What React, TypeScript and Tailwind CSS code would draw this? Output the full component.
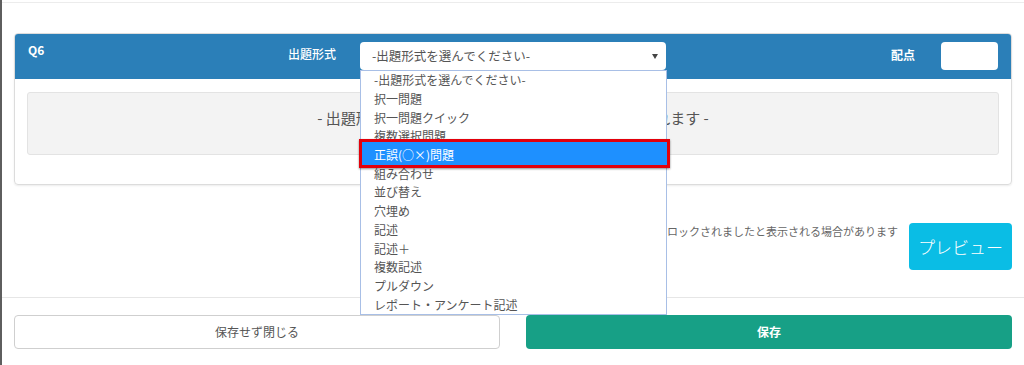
const options = [
  "-出題形式を選んでください-",
  "択一問題",
  "択一問題クイック",
  "複数選択問題",
  "正誤(○×)問題",
  "組み合わせ",
  "並び替え",
  "穴埋め",
  "記述",
  "記述＋",
  "複数記述",
  "プルダウン",
  "レポート・アンケート記述",
];

const SELECTED = 4;

const QuestionHeader = () => (
  <div className="flex h-[45px] items-start rounded-t-[3px] bg-[#2b7fb8] pl-[13px] pr-[13px] pt-[8px] text-white">
    <div className="w-[260px] pt-[1px] text-[12px] font-bold leading-[14px]">Q6</div>
    <div className="w-[72px] pt-[4px] text-[12px] font-medium leading-[16px]">出題形式</div>
    <div className="relative z-10 w-[306px]">
      <div className="flex h-[28px] items-center justify-between rounded-[4px] bg-white pl-[12px] pr-[8px] text-[12.5px] text-[#555]">
        <span>-出題形式を選んでください-</span>
        <svg width="6" height="5" viewBox="0 0 6 5">
          <path d="M0 0h6L3 5z" fill="#444" />
        </svg>
      </div>
      <ul className="absolute left-0 top-full w-[307px] border border-[#a8bfe6] bg-white text-[12px] text-[#555]">
        {options.map((o, i) =>
          i === SELECTED ? (
            <li key={o} className="relative flex h-[18.7px] items-center pl-[13px] text-white">
              <span className="absolute -bottom-[4px] -left-[2px] -right-[4px] -top-[7px] border-[3px] border-[#e3000b] bg-[#1e90ff] shadow-[0_1px_2px_rgba(0,0,0,0.45)]" />
              <span className="relative">{o}</span>
            </li>
          ) : (
            <li key={o} className="flex h-[18.7px] items-center pl-[13px]">
              {o}
            </li>
          )
        )}
      </ul>
    </div>
    <div className="flex-1" />
    <div className="pt-[5px] text-[12px] font-bold leading-[16px]">配点</div>
    <div className="ml-[26px] h-[28px] w-[57px] rounded-[4px] bg-white" />
  </div>
);

export default function App() {
  return (
    <div className="relative h-[365px] w-[1024px] overflow-hidden border-l-2 border-[#5e5e5e] bg-white font-['Noto_Sans_CJK_JP','Noto_Sans',sans-serif]">
      <div className="mt-[2px] border-t border-[#ececec]" />

      <div className="px-[12px] pt-[30px]">
        <div className="h-[152px] rounded-[4px] border border-[#dcdcdc] shadow-[0_1px_2px_rgba(0,0,0,0.08)]">
          <QuestionHeader />
          <div className="px-[12px] pt-[13px]">
            <div className="h-[63px] rounded-[3px] border border-[#e3e3e3] bg-[#f3f3f3] pt-[14px] text-center text-[15px] leading-[22px] text-[#555]">
              - 出題形式を選択すると、問題文の入力欄が表示されます -
            </div>
          </div>
        </div>

        <div className="flex items-start justify-end gap-[11px] pt-[38px]">
          <p className="pt-[1px] text-[11px] leading-[14px] text-[#666]">
            ロックされましたと表示される場合があります
          </p>
          <button className="h-[47px] w-[103px] rounded-[4px] bg-[#0abde5] text-[17px] font-light text-white">
            プレビュー
          </button>
        </div>
      </div>

      <div className="mt-[27px] border-t border-[#e6e6e6]" />

      <div className="grid grid-cols-2 gap-[26px] px-[12px] pt-[17px]">
        <button className="h-[34px] rounded-[4px] border border-[#cfcfcf] bg-white text-[12px] text-[#555]">
          保存せず閉じる
        </button>
        <button className="h-[34px] rounded-[4px] bg-[#17a086] text-[12px] font-bold text-white">
          保存
        </button>
      </div>
    </div>
  );
}
